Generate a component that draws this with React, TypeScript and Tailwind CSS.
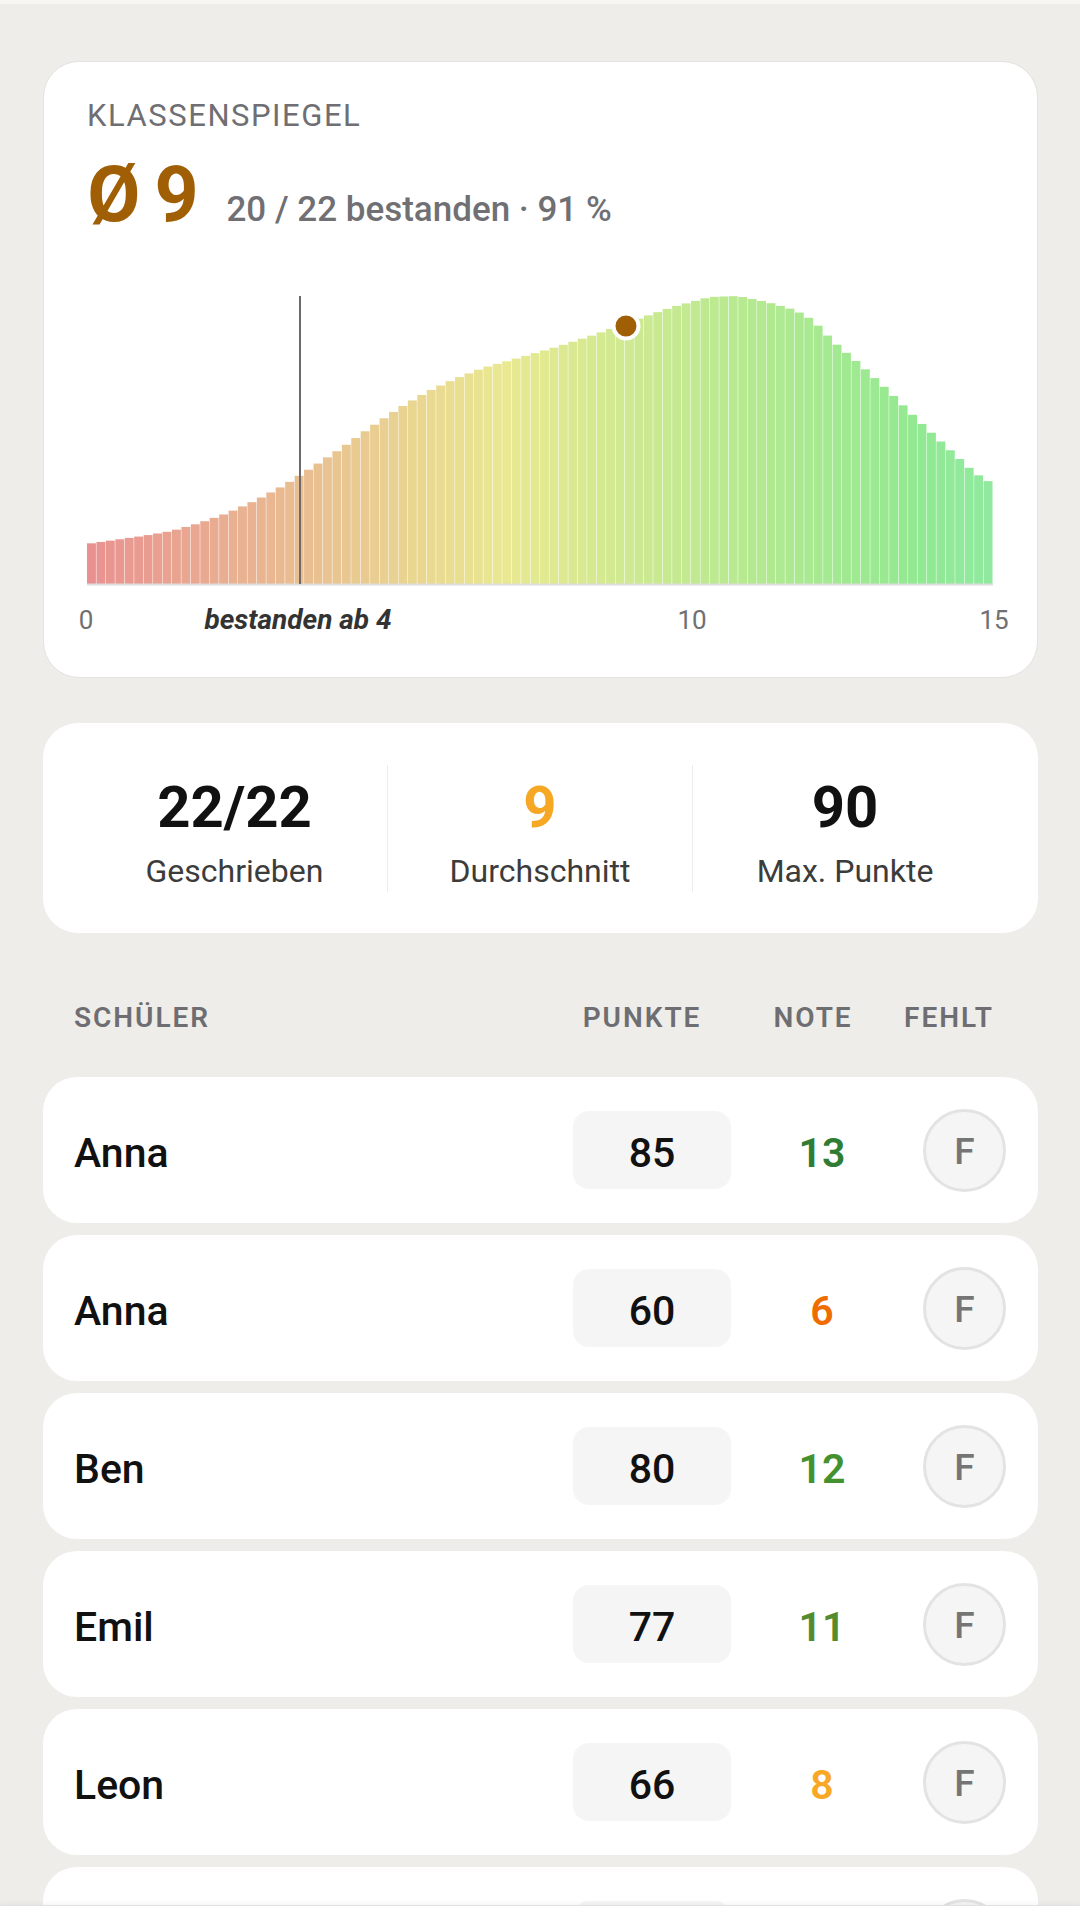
import React from "react";

const curve: [number, number][] = [
  [87, 40], [115, 44], [143, 48], [172, 53], [200, 61], [228, 71], [257, 84], [285, 99],
  [313, 117], [342, 136], [370, 156], [398, 175], [427, 192], [455, 205], [483, 216],
  [522, 227], [560, 238], [597, 250], [635, 264], [673, 277], [710, 287], [738, 288],
  [767, 282], [795, 274], [813, 264], [833, 243], [862, 218], [890, 192], [918, 164],
  [947, 137], [975, 111], [993, 100],
];

const heightAt = (x: number) => {
  for (let i = 0; i < curve.length - 1; i++) {
    const [x0, h0] = curve[i];
    const [x1, h1] = curve[i + 1];
    if (x >= x0 && x <= x1) return h0 + ((h1 - h0) * (x - x0)) / (x1 - x0);
  }
  return x < curve[0][0] ? curve[0][1] : curve[curve.length - 1][1];
};

const BAR_COUNT = 96;
const LEFT = 87;
const RIGHT = 993;
const BASE = 583;
const step = (RIGHT - LEFT) / BAR_COUNT;

const Chart = () => {
  const bars = Array.from({ length: BAR_COUNT }, (_, i) => {
    const x = LEFT + i * step;
    const h = heightAt(x + step / 2);
    const t = i / (BAR_COUNT - 1);
    return { x, h, hue: t * 130 };
  });

  return (
    <svg
      width={993}
      height={406}
      viewBox="44 270 993 406"
      className="block -mx-[43px]"
    >
      {bars.map((b, i) => (
        <rect
          key={i}
          x={b.x}
          y={BASE - b.h}
          width={step - 0.5}
          height={b.h}
          fill={`hsl(${b.hue.toFixed(1)} 66% 72%)`}
          fillOpacity={0.92}
        />
      ))}
      <line x1={LEFT} x2={RIGHT} y1={BASE + 0.5} y2={BASE + 0.5} stroke="#dddddd" strokeWidth={2} />
      <line x1={300} x2={300} y1={295} y2={BASE} stroke="#6b6b6b" strokeWidth={2} />
      <circle cx={626} cy={325} r={12.5} fill="#a15f05" stroke="#ffffff" strokeWidth={4} />

      <g fontFamily="Roboto, sans-serif" fontSize={26} textAnchor="middle">
        <text x={86} y={628} fill="#707070">0</text>
        <text x={298} y={628} fill="#333333" fontSize={28} fontWeight={700} fontStyle="italic">
          bestanden ab 4
        </text>
        <text x={692} y={628} fill="#707070">10</text>
        <text x={994} y={628} fill="#707070">15</text>
      </g>
    </svg>
  );
};

const Stat = ({ value, label, color, divider }: { value: string; label: string; color: string; divider?: boolean }) => (
  <div className={`flex h-[127px] flex-col items-center pt-[13px] ${divider ? "border-l border-[#ececec]" : ""}`}>
    <div className={`text-[58px] leading-[58px] font-bold ${color}`}>{value}</div>
    <div className="mt-[17px] text-[32px] leading-[36px] text-[#3c3c3c]">{label}</div>
  </div>
);

const students = [
  { name: "Anna", points: 85, grade: 13, color: "text-[#2e7d32]" },
  { name: "Anna", points: 60, grade: 6, color: "text-[#ef6c00]" },
  { name: "Ben", points: 80, grade: 12, color: "text-[#43922f]" },
  { name: "Emil", points: 77, grade: 11, color: "text-[#558b2f]" },
  { name: "Leon", points: 66, grade: 8, color: "text-[#f9a825]" },
];

const Row = ({ name, points, grade, color }: { name?: string; points?: number; grade?: number; color?: string }) => (
  <div className="flex h-[146px] shrink-0 items-center rounded-[34px] bg-white pl-[31px] pr-[32px]">
    <div className="flex-1 pt-[7px] text-[41px] font-medium text-[#111111]">{name}</div>
    <div className="flex h-[78px] w-[158px] items-center justify-center rounded-[16px] bg-[#f5f5f5] pt-[7px] text-[41px] font-medium text-[#111111]">
      {points}
    </div>
    <div className={`w-[182px] pt-[7px] text-center text-[41px] font-semibold ${color ?? ""}`}>{grade}</div>
    <div className="ml-[10px] flex h-[83px] w-[83px] items-center justify-center rounded-full border-[3px] border-[#e3e3e3] bg-[#f5f5f5] pt-[3px] text-[37px] font-medium text-[#757575]">
      {name ? "F" : null}
    </div>
  </div>
);

export default function App() {
  return (
    <div className="relative h-[1920px] w-[1080px] overflow-hidden bg-[#eeede9] font-['Roboto',sans-serif]">
      <div className="h-[4px] bg-[#f7f6f3]" />

      <div className="pl-[43px] pr-[42px]">
        {/* Klassenspiegel */}
        <div className="mt-[57px] rounded-[36px] border border-[#e3e2de] bg-white px-[43px] pt-[36px]">
          <div className="text-[31px] leading-[36px] tracking-[0.05em] text-[#6f6f73]">KLASSENSPIEGEL</div>
          <div className="mt-[23px] flex h-[77px] items-baseline">
            <span className="text-[77px] leading-[77px] font-bold tracking-[-0.03em] text-[#a15f05]">Ø 9</span>
            <span className="ml-[30px] text-[35px] leading-none font-medium text-[#707074]">20 / 22 bestanden · 91 %</span>
          </div>
          <div className="mt-[37px]">
            <Chart />
          </div>
        </div>

        {/* Kennzahlen */}
        <div className="mt-[45px] grid h-[210px] grid-cols-3 rounded-[35px] bg-white pb-[41px] pl-[39px] pr-[41px] pt-[42px]">
          <Stat value="22/22" label="Geschrieben" color="text-[#111111]" />
          <Stat value="9" label="Durchschnitt" color="text-[#f6a723]" divider />
          <Stat value="90" label="Max. Punkte" color="text-[#111111]" divider />
        </div>

        {/* Tabellenkopf */}
        <div className="mt-[69px] flex h-[32px] items-center pl-[31px] pr-[39px] text-[28px] leading-[32px] font-semibold tracking-[0.07em] text-[#6e6e72]">
          <div className="flex-1">SCHÜLER</div>
          <div className="w-[140px] text-center">PUNKTE</div>
          <div className="ml-[51px] w-[100px] text-center">NOTE</div>
          <div className="ml-[36px] w-[100px] text-center">FEHLT</div>
        </div>

        {/* Schüler */}
        <div className="mt-[43px] flex flex-col gap-[12px]">
          {students.map((s, i) => (
            <Row key={i} {...s} />
          ))}
          <Row />
        </div>
      </div>

      <div className="absolute inset-x-0 bottom-0 h-[15px] border-t border-[#e2e2e2] bg-white shadow-[0_-2px_4px_rgba(0,0,0,0.04)]" />
    </div>
  );
}
